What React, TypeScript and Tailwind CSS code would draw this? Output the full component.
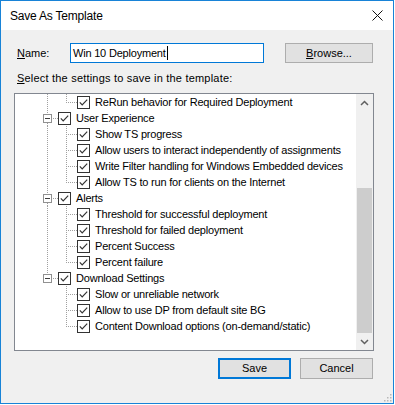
import React from "react";

type Row = { level: 1 | 2; text: string; last?: boolean; parentLast?: boolean };

const rows: Row[] = [
  { level: 2, text: "ReRun behavior for Required Deployment", last: true },
  { level: 1, text: "User Experience" },
  { level: 2, text: "Show TS progress" },
  { level: 2, text: "Allow users to interact independently of assignments" },
  { level: 2, text: "Write Filter handling for Windows Embedded devices" },
  { level: 2, text: "Allow TS to run for clients on the Internet", last: true },
  { level: 1, text: "Alerts" },
  { level: 2, text: "Threshold for successful deployment" },
  { level: 2, text: "Threshold for failed deployment" },
  { level: 2, text: "Percent Success" },
  { level: 2, text: "Percent failure", last: true },
  { level: 1, text: "Download Settings", last: true },
  { level: 2, text: "Slow or unreliable network", parentLast: true },
  { level: 2, text: "Allow to use DP from default site BG", parentLast: true },
  { level: 2, text: "Content Download options (on-demand/static)", parentLast: true, last: true },
];

const DOT = "#a0a0a0";

function Check() {
  return (
    <svg width="13" height="13" viewBox="0 0 13 13" className="shrink-0">
      <rect x="0.5" y="0.5" width="12" height="12" fill="#fff" stroke="#333" />
      <path d="M2.8 6.4 L5.2 8.9 L10.2 3.6" fill="none" stroke="#333" strokeWidth="1.2" />
    </svg>
  );
}

function Gutter({ row }: { row: Row }) {
  if (row.level === 2) {
    return (
      <svg width="62" height="16" className="shrink-0" shapeRendering="crispEdges">
        {!row.parentLast && (
          <line x1="32.5" y1="0" x2="32.5" y2="16" stroke={DOT} strokeDasharray="1 1" />
        )}
        <line x1="51.5" y1="0" x2="51.5" y2={row.last ? 9 : 16} stroke={DOT} strokeDasharray="1 1" />
        <line x1="53" y1="8.5" x2="62" y2="8.5" stroke={DOT} strokeDasharray="1 1" />
      </svg>
    );
  }
  return (
    <svg width="43" height="16" className="shrink-0" shapeRendering="crispEdges">
      <line x1="32.5" y1="0" x2="32.5" y2="4" stroke={DOT} strokeDasharray="1 1" />
      {!row.last && (
        <line x1="32.5" y1="13" x2="32.5" y2="16" stroke={DOT} strokeDasharray="1 1" />
      )}
      <rect x="28.5" y="4.5" width="8" height="8" fill="#fff" stroke="#919191" />
      <line x1="30" y1="8.5" x2="35" y2="8.5" stroke="#3c3c3c" />
      <line x1="38" y1="8.5" x2="43" y2="8.5" stroke={DOT} strokeDasharray="1 1" />
    </svg>
  );
}

export default function App() {
  const font = { fontFamily: '"Liberation Sans", Arial, sans-serif' };
  return (
    <div className="w-[395px] h-[405px] bg-white" style={font}>
      <div className="w-[394px] h-[404px] border border-[#1883d7] flex flex-col bg-[#f0f0f0] text-[11px] text-black">
        {/* title bar */}
        <div className="h-[29px] bg-white flex items-center justify-between pl-[9px] pr-[10px] shrink-0">
          <span className="text-[12px] tracking-[-0.2px]">Save As Template</span>
          <svg width="11" height="11" viewBox="0 0 11 11">
            <path d="M0.5 0.5 L10.5 10.5 M10.5 0.5 L0.5 10.5" stroke="#111" strokeWidth="1" />
          </svg>
        </div>
        {/* client */}
        <div className="relative flex-1 flex flex-col">
          <div className="flex items-center mt-[13px] h-[20px]">
            <span className="ml-[16px] w-[53px]">
              <span className="underline underline-offset-[1px]">N</span>ame:
            </span>
            <div className="w-[194px] h-[20px] border border-[#0078d7] bg-white flex items-center pl-[2px]">
              <span className="tracking-[-0.2px]">Win 10 Deployment</span>
              <span className="w-px h-[14px] bg-black ml-[1px]" />
            </div>
            <div className="ml-[21px] w-[88px] h-[20px] border border-[#adadad] bg-[#e1e1e1] flex items-center justify-center">
              <span>
                <span className="underline underline-offset-[1px]">B</span>rowse...
              </span>
            </div>
          </div>
          <div className="ml-[16px] mt-[9px] leading-[13px] tracking-[0.2px]">
            <span className="underline underline-offset-[1px]">S</span>elect the settings to save in the template:
          </div>
          <div className="ml-[13px] mt-[8px] w-[360px] h-[258px] border border-[#828790] bg-white flex">
            <div className="flex-1 flex flex-col overflow-hidden">
              {rows.map((r, i) => (
                <div key={i} className="flex items-center h-[16px] shrink-0 whitespace-nowrap">
                  <Gutter row={r} />
                  <Check />
                  <span className="ml-[5px] tracking-[-0.2px]">{r.text}</span>
                </div>
              ))}
            </div>
            <div className="w-[17px] bg-[#f0f0f0] flex flex-col shrink-0">
              <div className="h-[17px] flex items-center justify-center">
                <svg width="9" height="6" viewBox="0 0 9 6">
                  <path d="M1 5 L4.5 1.5 L8 5" fill="none" stroke="#606060" strokeWidth="1.5" />
                </svg>
              </div>
              <div className="h-[77px]" />
              <div className="flex-1 mx-[1px] bg-[#cdcdcd]" />
              <div className="h-[17px] flex items-center justify-center">
                <svg width="9" height="6" viewBox="0 0 9 6">
                  <path d="M1 1 L4.5 4.5 L8 1" fill="none" stroke="#606060" strokeWidth="1.5" />
                </svg>
              </div>
            </div>
          </div>
          <div className="flex justify-end mt-[7px] mr-[20px] gap-[9px]">
            <div className="w-[73px] h-[21px] border-2 border-[#0078d7] bg-[#e1e1e1] flex items-center justify-center">
              Save
            </div>
            <div className="w-[73px] h-[21px] border border-[#adadad] bg-[#e1e1e1] flex items-center justify-center">
              Cancel
            </div>
          </div>
          <svg width="9" height="9" viewBox="0 0 9 9" className="absolute right-[1px] bottom-[1px]">
            {[
              [7, 1],
              [7, 4],
              [4, 4],
              [7, 7],
              [4, 7],
              [1, 7],
            ].map(([x, y], i) => (
              <rect key={i} x={x} y={y} width="1.5" height="1.5" fill="#b8b8b8" />
            ))}
          </svg>
        </div>
      </div>
    </div>
  );
}
